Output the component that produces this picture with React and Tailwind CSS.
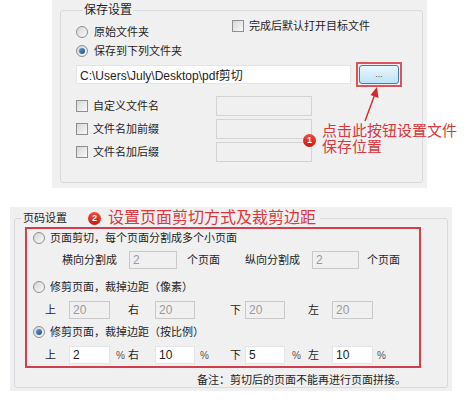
import React from "react";

const font = { fontFamily: '"Liberation Sans", "Noto Sans CJK SC", sans-serif' };

const Radio = ({ checked }) => (
  <span className="flex w-[12px] h-[12px] shrink-0 items-center justify-center rounded-full border border-[#8e8f8f] bg-gradient-to-br from-[#d4d4d4] to-[#fbfbfb]">
    {checked && (
      <span className="block w-[6px] h-[6px] rounded-full bg-gradient-to-br from-[#5fa0d8] to-[#1b4f8a]" />
    )}
  </span>
);

const Check = () => (
  <span className="block w-[12px] h-[12px] shrink-0 border border-[#8e8f8f] bg-gradient-to-br from-[#d6d6d6] to-[#fafafa]" />
);

const Field = ({ value, disabled, className }) => (
  <input
    readOnly
    value={value}
    className={`h-[18px] px-[3px] text-[12px] outline-none border ${
      disabled
        ? "bg-[#f0f0f0] border-[#c9c9c9] text-[#9a9a9a]"
        : "bg-white border-[#e2e4e7] text-[#222]"
    } ${className}`}
    style={font}
  />
);

const Badge = ({ n }) => (
  <span className="flex w-[13px] h-[13px] items-center justify-center rounded-full bg-gradient-to-b from-[#f04a40] to-[#c8100c] text-white text-[9px] font-bold leading-none">
    {n}
  </span>
);

const MarginRow = ({ values, disabled, pct }) => (
  <div className="flex items-center h-[18px]">
    <span className="ml-[14px] w-[11px]">上</span>
    <Field value={values[0]} disabled={disabled} className="ml-[13px] w-[41px]" />
    <span className="w-[18px] pl-[6px] text-[10px] text-[#555]">{pct ? "%" : ""}</span>
    <span className="w-[11px]">右</span>
    <Field value={values[1]} disabled={disabled} className="ml-[16px] w-[40px]" />
    <span className="w-[35px] pl-[5px] text-[10px] text-[#555]">{pct ? "%" : ""}</span>
    <span className="w-[11px]">下</span>
    <Field value={values[2]} disabled={disabled} className="ml-[4px] w-[40px]" />
    <span className="w-[23px] pl-[7px] text-[10px] text-[#555]">{pct ? "%" : ""}</span>
    <span className="w-[11px]">左</span>
    <Field value={values[3]} disabled={disabled} className="ml-[13px] w-[41px]" />
    <span className="pl-[4px] text-[10px] text-[#555]">{pct ? "%" : ""}</span>
  </div>
);

export default function App() {
  return (
    <div className="w-[467px] h-[400px] bg-white text-[11px] text-[#1e1e1e] overflow-hidden" style={font}>
      {/* 保存设置 */}
      <div className="relative ml-[52px] w-[375px] h-[188px] bg-[#f0f0f0] pt-[3px] pl-[8px] pr-[4px]">
        <fieldset className="border border-[#d6dbe0] rounded-[3px] pl-[15px] pb-[20px]">
          <legend className="ml-[7px] px-[1px] text-[12px] leading-[14px]">保存设置</legend>

          <div className="flex h-[20px] mt-[2px]">
            <label className="flex items-center gap-[6px] w-[156px] self-end h-[14px]">
              <Radio />
              <span>原始文件夹</span>
            </label>
            <label className="flex items-center gap-[5px] h-[14px]">
              <Check />
              <span>完成后默认打开目标文件</span>
            </label>
          </div>

          <label className="flex items-center gap-[6px] h-[14px] mt-[5px]">
            <Radio checked />
            <span>保存到下列文件夹</span>
          </label>

          <div className="flex items-center h-[25px] mt-[4px]">
            <Field value="C:\Users\July\Desktop\pdf剪切" className="w-[275px] h-[19px] border-[#abadb3]" />
            <div className="ml-[5px] border-2 border-[#d9555a] p-[1px]">
              <button className="flex w-[40px] h-[19px] items-center justify-center rounded-[3px] border border-[#3c7fb1] bg-gradient-to-b from-[#eaf6fd] to-[#bfe3f6] text-[9px] text-[#444] leading-none">
                ...
              </button>
            </div>
          </div>

          <div className="flex flex-col gap-[3px] mt-[9px]">
            {["自定义文件名", "文件名加前缀", "文件名加后缀"].map((t) => (
              <div key={t} className="flex items-center h-[20px]">
                <label className="flex items-center gap-[5px] w-[140px]">
                  <Check />
                  <span>{t}</span>
                </label>
                <Field value="" disabled className="w-[96px] h-[20px] border-[#d3d3d3]" />
              </div>
            ))}
          </div>
        </fieldset>

        {/* annotation 1 */}
        <svg className="absolute left-[308px] top-[86px]" width="20" height="38" viewBox="0 0 20 38">
          <line x1="5" y1="35" x2="15" y2="8" stroke="#d8282c" strokeWidth="1.4" />
          <polygon points="17,1 18.5,12 10.5,9" fill="#d8282c" />
        </svg>
        <div className="absolute left-[251px] top-[134px]">
          <Badge n="1" />
        </div>
        <div className="absolute left-[270px] top-[123px] text-[15px] leading-[16px] text-[#d9383d] whitespace-nowrap">
          <div>点击此按钮设置文件</div>
          <div>保存位置</div>
        </div>
      </div>

      {/* 页码设置 */}
      <div className="ml-[10px] mt-[19px] w-[442px] bg-[#f0f0f0] pt-[3px] px-[4px] pb-[3px]">
        <fieldset className="border border-[#d6dbe0] rounded-[3px]">
          <legend className="ml-[6px] pl-[2px] pr-[4px] flex items-center h-[16px]">
            <span className="text-[11px]">页码设置</span>
            <span className="ml-[21px]">
              <Badge n="2" />
            </span>
            <span className="ml-[7px] text-[16px] leading-[16px] text-[#d9383d]">设置页面剪切方式及裁剪边距</span>
          </legend>

          <div className="ml-[10px] mt-[1px] w-[396px] border-2 border-[#d0404c] pl-[4px] pt-[2px] pb-[2px]">
            <label className="flex items-center gap-[5px] h-[14px] ml-[2px]">
              <Radio />
              <span>页面剪切，每个页面分割成多个小页面</span>
            </label>

            <div className="flex items-center h-[18px] mt-[6px]">
              <span className="ml-[31px] w-[67px]">横向分割成</span>
              <Field value="2" disabled className="w-[48px]" />
              <span className="ml-[10px] w-[58px]">个页面</span>
              <span className="w-[67px]">纵向分割成</span>
              <Field value="2" disabled className="w-[47px]" />
              <span className="ml-[8px]">个页面</span>
            </div>

            <label className="flex items-center gap-[5px] h-[14px] mt-[11px] ml-[2px]">
              <Radio />
              <span>修剪页面，裁掉边距（像素）</span>
            </label>

            <div className="mt-[7px]">
              <MarginRow values={["20", "20", "20", "20"]} disabled />
            </div>

            <label className="flex items-center gap-[5px] h-[14px] mt-[6px] ml-[2px]">
              <Radio checked />
              <span>修剪页面，裁掉边距（按比例）</span>
            </label>

            <div className="mt-[7px]">
              <MarginRow values={["2", "10", "5", "10"]} pct />
            </div>
          </div>

          <div className="h-[14px] mt-[5px] pl-[182px] leading-[14px]">备注：剪切后的页面不能再进行页面拼接。</div>
        </fieldset>
      </div>
    </div>
  );
}
